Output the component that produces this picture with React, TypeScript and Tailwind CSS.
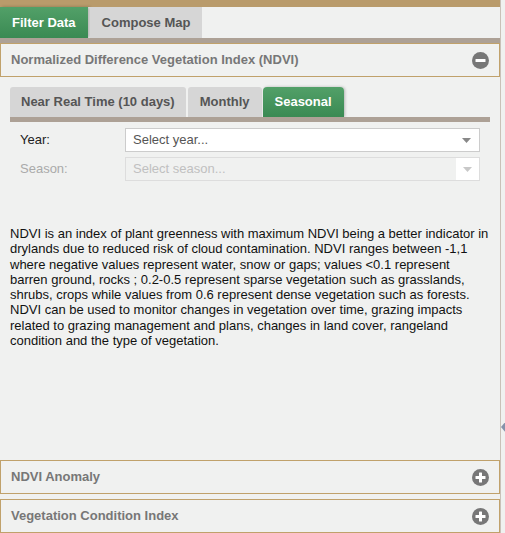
import React from 'react'

const font = { fontFamily: '"Liberation Sans", Arial, sans-serif' }

const CircleIcon = ({ plus }: { plus?: boolean }) => (
  <svg width="17" height="17" viewBox="0 0 17 17" className="shrink-0">
    <circle cx="8.5" cy="8.5" r="8.5" fill="#777777" />
    <rect x="3.5" y="7" width="10" height="3" rx="0.5" fill="#ffffff" />
    {plus && <rect x="7" y="3.5" width="3" height="10" rx="0.5" fill="#ffffff" />}
  </svg>
)

const Caret = ({ light }: { light?: boolean }) => (
  <svg width="9" height="5" viewBox="0 0 9 5">
    <path d="M0 0 L9 0 L4.5 5 Z" fill={light ? '#c8c8c8' : '#888888'} />
  </svg>
)

const PanelHeader = ({ title, open }: { title: string; open?: boolean }) => (
  <div className="flex h-[34px] items-center justify-between border border-[#c0a16b] bg-[#f0f1f0] pl-[10px] pr-[10px]">
    <span className="text-[13px] font-bold text-[#777777]">{title}</span>
    <CircleIcon plus={!open} />
  </div>
)

const App = () => {
  return (
    <div className="relative flex h-[533px] w-[505px] overflow-hidden bg-[#f0f1f0]" style={font}>
      <div className="flex w-[501px] shrink-0 flex-col border-r border-[#c9c1b8]">
        <div className="h-[7px] bg-[#b99b6b]" />
        <div className="flex h-[31px] items-stretch gap-[2px]">
          <div className="flex items-center bg-gradient-to-b from-[#52a068] to-[#3a8a53] px-[12px] text-[13px] font-bold text-white shadow-[2px_0_3px_rgba(0,0,0,0.25)]">
            Filter Data
          </div>
          <div className="flex items-center bg-[#d6d6d6] px-[12px] text-[13px] font-bold text-[#555555]">
            Compose Map
          </div>
        </div>
        <div className="h-[5px] bg-[#ada196]" />

        <PanelHeader title="Normalized Difference Vegetation Index (NDVI)" open />

        <div className="flex h-[383px] flex-col px-[10px] pt-[10px]">
          <div className="flex h-[30px] items-stretch">
            <div className="flex items-center rounded-t-[3px] bg-[#d6d6d6] px-[11px] text-[13px] font-bold text-[#555555]">
              Near Real Time (10 days)
            </div>
            <div className="ml-[2px] flex items-center rounded-t-[3px] bg-[#d6d6d6] px-[12px] text-[13px] font-bold text-[#555555]">
              Monthly
            </div>
            <div className="ml-[1px] flex items-center rounded-t-[4px] bg-gradient-to-b from-[#52a068] to-[#3a8a53] px-[12px] text-[13px] font-bold text-white shadow-[1px_0_3px_rgba(0,0,0,0.25)]">
              Seasonal
            </div>
          </div>
          <div className="h-[5px] bg-[#ada196]" />

          <div className="mt-[6px] flex flex-col gap-[5px] pr-[10px]">
            <div className="flex items-center">
              <span className="w-[115px] pl-[10px] text-[13px] text-[#222222]">Year:</span>
              <div className="flex h-[24px] flex-1 items-center justify-between border border-[#cccccc] bg-white pl-[7px] pr-[8px]">
                <span className="text-[13px] text-[#555555]">Select year...</span>
                <Caret />
              </div>
            </div>
            <div className="flex items-center">
              <span className="w-[115px] pl-[10px] text-[13px] text-[#aaaaaa]">Season:</span>
              <div className="flex h-[24px] flex-1 items-stretch border border-[#dddddd] bg-[#f0f1f0]">
                <span className="flex flex-1 items-center pl-[7px] text-[13px] text-[#c0c0c0]">Select season...</span>
                <div className="flex w-[23px] items-center justify-center bg-white">
                  <Caret light />
                </div>
              </div>
            </div>
          </div>

          <p className="mt-[45px] text-[13px] leading-[15.25px] text-[#111111]">
            NDVI is an index of plant greenness with maximum NDVI being a better indicator in drylands due to reduced risk of cloud contamination. NDVI ranges between -1,1 where negative values represent water, snow or gaps; values &lt;0.1 represent barren ground, rocks ; 0.2-0.5 represent sparse vegetation such as grasslands, shrubs, crops while values from 0.6 represent dense vegetation such as forests. NDVI can be used to monitor changes in vegetation over time, grazing impacts related to grazing management and plans, changes in land cover, rangeland condition and the type of vegetation.
          </p>
        </div>

        <div className="flex flex-col gap-[5px]">
          <PanelHeader title="NDVI Anomaly" />
          <PanelHeader title="Vegetation Condition Index" />
        </div>
      </div>

      <div className="absolute left-[501px] top-[421px]">
        <svg width="5" height="12" viewBox="0 0 5 12">
          <path d="M5 0 L0 6 L5 12 Z" fill="#8592aa" />
        </svg>
      </div>
    </div>
  )
}

export default App
